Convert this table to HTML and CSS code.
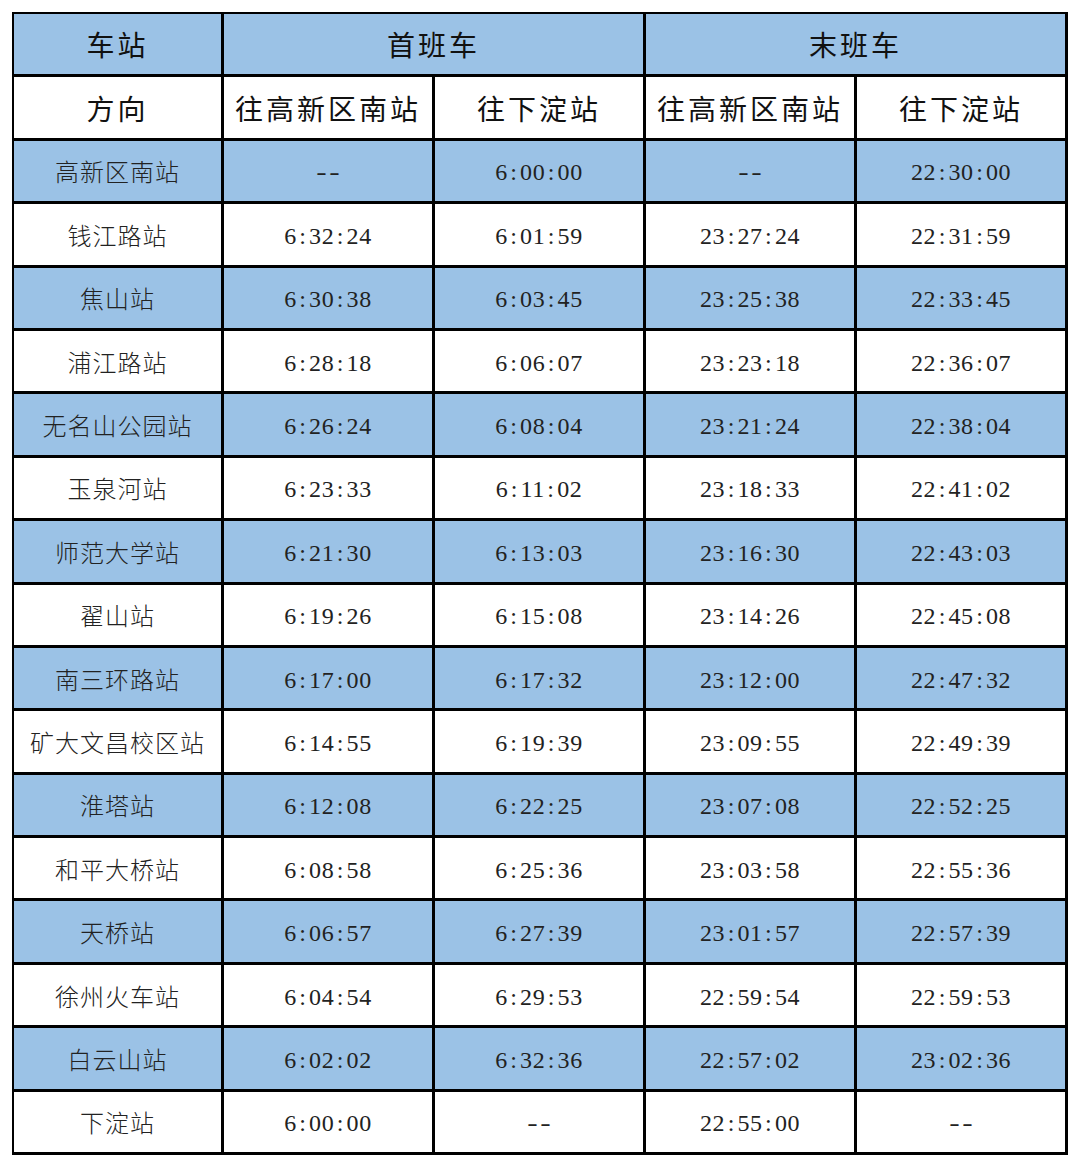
FILE: index.html
```html
<!DOCTYPE html>
<html lang="zh-CN">
<head>
<meta charset="utf-8">
<title>时刻表</title>
<link rel="stylesheet" href="styles.css">
</head>
<body>
<table class="tt">
<colgroup><col class="c1"><col class="cn"><col class="cn"><col class="cn"><col class="cn"></colgroup>
<tr class="b hd"><td>车站</td><td colspan="2">首班车</td><td colspan="2">末班车</td></tr>
<tr class="hd"><td>方向</td><td>往高新区南站</td><td>往下淀站</td><td>往高新区南站</td><td>往下淀站</td></tr>
<tr class="b"><td class="st">高新区南站</td><td><span class="d">--</span></td><td>6<span class="k">:</span>00<span class="k">:</span>00</td><td><span class="d">--</span></td><td>22<span class="k">:</span>30<span class="k">:</span>00</td></tr>
<tr><td class="st">钱江路站</td><td>6<span class="k">:</span>32<span class="k">:</span>24</td><td>6<span class="k">:</span>01<span class="k">:</span>59</td><td>23<span class="k">:</span>27<span class="k">:</span>24</td><td>22<span class="k">:</span>31<span class="k">:</span>59</td></tr>
<tr class="b"><td class="st">焦山站</td><td>6<span class="k">:</span>30<span class="k">:</span>38</td><td>6<span class="k">:</span>03<span class="k">:</span>45</td><td>23<span class="k">:</span>25<span class="k">:</span>38</td><td>22<span class="k">:</span>33<span class="k">:</span>45</td></tr>
<tr><td class="st">浦江路站</td><td>6<span class="k">:</span>28<span class="k">:</span>18</td><td>6<span class="k">:</span>06<span class="k">:</span>07</td><td>23<span class="k">:</span>23<span class="k">:</span>18</td><td>22<span class="k">:</span>36<span class="k">:</span>07</td></tr>
<tr class="b"><td class="st">无名山公园站</td><td>6<span class="k">:</span>26<span class="k">:</span>24</td><td>6<span class="k">:</span>08<span class="k">:</span>04</td><td>23<span class="k">:</span>21<span class="k">:</span>24</td><td>22<span class="k">:</span>38<span class="k">:</span>04</td></tr>
<tr><td class="st">玉泉河站</td><td>6<span class="k">:</span>23<span class="k">:</span>33</td><td>6<span class="k">:</span>11<span class="k">:</span>02</td><td>23<span class="k">:</span>18<span class="k">:</span>33</td><td>22<span class="k">:</span>41<span class="k">:</span>02</td></tr>
<tr class="b"><td class="st">师范大学站</td><td>6<span class="k">:</span>21<span class="k">:</span>30</td><td>6<span class="k">:</span>13<span class="k">:</span>03</td><td>23<span class="k">:</span>16<span class="k">:</span>30</td><td>22<span class="k">:</span>43<span class="k">:</span>03</td></tr>
<tr><td class="st">翟山站</td><td>6<span class="k">:</span>19<span class="k">:</span>26</td><td>6<span class="k">:</span>15<span class="k">:</span>08</td><td>23<span class="k">:</span>14<span class="k">:</span>26</td><td>22<span class="k">:</span>45<span class="k">:</span>08</td></tr>
<tr class="b"><td class="st">南三环路站</td><td>6<span class="k">:</span>17<span class="k">:</span>00</td><td>6<span class="k">:</span>17<span class="k">:</span>32</td><td>23<span class="k">:</span>12<span class="k">:</span>00</td><td>22<span class="k">:</span>47<span class="k">:</span>32</td></tr>
<tr><td class="st">矿大文昌校区站</td><td>6<span class="k">:</span>14<span class="k">:</span>55</td><td>6<span class="k">:</span>19<span class="k">:</span>39</td><td>23<span class="k">:</span>09<span class="k">:</span>55</td><td>22<span class="k">:</span>49<span class="k">:</span>39</td></tr>
<tr class="b"><td class="st">淮塔站</td><td>6<span class="k">:</span>12<span class="k">:</span>08</td><td>6<span class="k">:</span>22<span class="k">:</span>25</td><td>23<span class="k">:</span>07<span class="k">:</span>08</td><td>22<span class="k">:</span>52<span class="k">:</span>25</td></tr>
<tr><td class="st">和平大桥站</td><td>6<span class="k">:</span>08<span class="k">:</span>58</td><td>6<span class="k">:</span>25<span class="k">:</span>36</td><td>23<span class="k">:</span>03<span class="k">:</span>58</td><td>22<span class="k">:</span>55<span class="k">:</span>36</td></tr>
<tr class="b"><td class="st">天桥站</td><td>6<span class="k">:</span>06<span class="k">:</span>57</td><td>6<span class="k">:</span>27<span class="k">:</span>39</td><td>23<span class="k">:</span>01<span class="k">:</span>57</td><td>22<span class="k">:</span>57<span class="k">:</span>39</td></tr>
<tr><td class="st">徐州火车站</td><td>6<span class="k">:</span>04<span class="k">:</span>54</td><td>6<span class="k">:</span>29<span class="k">:</span>53</td><td>22<span class="k">:</span>59<span class="k">:</span>54</td><td>22<span class="k">:</span>59<span class="k">:</span>53</td></tr>
<tr class="b"><td class="st">白云山站</td><td>6<span class="k">:</span>02<span class="k">:</span>02</td><td>6<span class="k">:</span>32<span class="k">:</span>36</td><td>22<span class="k">:</span>57<span class="k">:</span>02</td><td>23<span class="k">:</span>02<span class="k">:</span>36</td></tr>
<tr><td class="st">下淀站</td><td>6<span class="k">:</span>00<span class="k">:</span>00</td><td><span class="d">--</span></td><td>22<span class="k">:</span>55<span class="k">:</span>00</td><td><span class="d">--</span></td></tr>
</table>
</body>
</html>
```

FILE: styles.css
```css
html, body {
  margin: 0;
  padding: 0;
  background: #ffffff;
}
body {
  padding: 12px 0 0 12px;
}
.tt {
  border-collapse: separate;
  border-spacing: 0;
  table-layout: fixed;
  width: 1055px;
  border-left: 2px solid #000;
  border-top: 2px solid #000;
  font-family: "Liberation Serif", "Noto Sans CJK SC", serif;
  font-size: 24px;
  color: #222;
}
.c1 { width: 210px; }
.cn { width: 211px; }
.tt td {
  box-sizing: border-box;
  height: 63.4px;
  padding: 3px 0 0 0;
  border-right: 3px solid #000;
  border-bottom: 3px solid #000;
  text-align: center;
  vertical-align: middle;
  letter-spacing: 0.6px;
  line-height: 1;
}
.tt tr.b td {
  background: #9bc2e6;
}
.tt td.st {
  font-family: "Noto Sans CJK SC", sans-serif;
  font-weight: 300;
  font-size: 24px;
  letter-spacing: 1px;
  padding-top: 1px;
}
.tt tr.hd td {
  font-family: "Noto Sans CJK SC", sans-serif;
  font-weight: 400;
  font-size: 28px;
  letter-spacing: 3px;
  color: #111;
  padding-top: 0;
}
.k {
  padding: 0 2.5px;
}
.d {
  display: inline-block;
  letter-spacing: 2px;
  transform: scaleX(1.3);
  padding-left: 2px;
}
```
